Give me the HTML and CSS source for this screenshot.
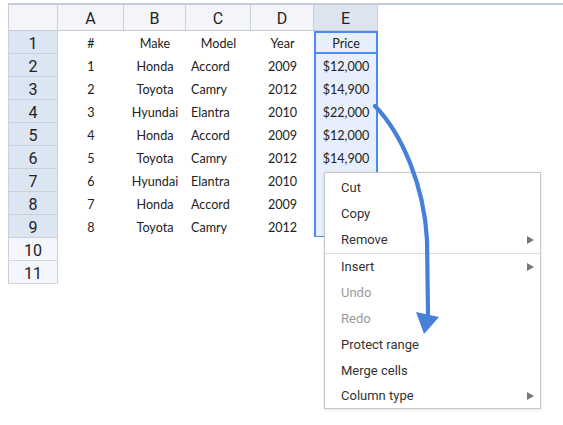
FILE: index.html
```html
<!DOCTYPE html>
<html>
<head>
<meta charset="utf-8">
<link rel="stylesheet" href="styles.css">
</head>
<body>
<div class="page">
  <div class="sheet">
    <div class="row head">
      <div class="corner"></div>
      <div class="ch">A</div>
      <div class="ch">B</div>
      <div class="ch">C</div>
      <div class="ch">D</div>
      <div class="ch sel">E</div>
    </div>
    <div class="row">
      <div class="rh on">1</div><div class="c">#</div><div class="c">Make</div><div class="c">Model</div><div class="c">Year</div><div class="c e active">Price</div>
    </div>
    <div class="row">
      <div class="rh on">2</div><div class="c">1</div><div class="c">Honda</div><div class="c l">Accord</div><div class="c">2009</div><div class="c e">$12,000</div>
    </div>
    <div class="row">
      <div class="rh on">3</div><div class="c">2</div><div class="c">Toyota</div><div class="c l">Camry</div><div class="c">2012</div><div class="c e">$14,900</div>
    </div>
    <div class="row">
      <div class="rh on">4</div><div class="c">3</div><div class="c">Hyundai</div><div class="c l">Elantra</div><div class="c">2010</div><div class="c e">$22,000</div>
    </div>
    <div class="row">
      <div class="rh on">5</div><div class="c">4</div><div class="c">Honda</div><div class="c l">Accord</div><div class="c">2009</div><div class="c e">$12,000</div>
    </div>
    <div class="row">
      <div class="rh on">6</div><div class="c">5</div><div class="c">Toyota</div><div class="c l">Camry</div><div class="c">2012</div><div class="c e">$14,900</div>
    </div>
    <div class="row">
      <div class="rh on">7</div><div class="c">6</div><div class="c">Hyundai</div><div class="c l">Elantra</div><div class="c">2010</div><div class="c e"></div>
    </div>
    <div class="row">
      <div class="rh on">8</div><div class="c">7</div><div class="c">Honda</div><div class="c l">Accord</div><div class="c">2009</div><div class="c e"></div>
    </div>
    <div class="row">
      <div class="rh on">9</div><div class="c">8</div><div class="c">Toyota</div><div class="c l">Camry</div><div class="c">2012</div><div class="c e last"></div>
    </div>
    <div class="row">
      <div class="rh">10</div><div class="c"></div><div class="c"></div><div class="c"></div><div class="c"></div><div class="c"></div>
    </div>
    <div class="row">
      <div class="rh">11</div><div class="c"></div><div class="c"></div><div class="c"></div><div class="c"></div><div class="c"></div>
    </div>
  </div>

  <div class="menu">
    <div class="item">Cut</div>
    <div class="item">Copy</div>
    <div class="item sub">Remove</div>
    <div class="sep"></div>
    <div class="item sub">Insert</div>
    <div class="item dis">Undo</div>
    <div class="item dis">Redo</div>
    <div class="item">Protect range</div>
    <div class="item">Merge cells</div>
    <div class="item sub lastitem">Column type</div>
  </div>

  <svg class="arrow" width="563" height="425" viewBox="0 0 563 425">
    <path d="M375,106 C402,134 424,185 427,240 L428,314" fill="none" stroke="#4680d9" stroke-width="4.2" stroke-linecap="round"/>
    <polygon points="416,312 439,317 424,334" fill="#4680d9"/>
  </svg>
</div>
</body>
</html>
```
FILE: styles.css
```css
html, body {
  margin: 0;
  padding: 0;
  background: #fff;
}
.page {
  position: relative;
  width: 563px;
  height: 425px;
  overflow: hidden;
  font-family: Lato, "Liberation Sans", sans-serif;
}
.sheet {
  margin-left: 8px;
  padding-top: 3px;
}
.row {
  display: grid;
  grid-template-columns: 50px 66px 62px 65px 63px 64px;
  height: 23px;
}
.row.head {
  height: 28px;
  border-top: 2px solid #c3ccd8;
  box-sizing: border-box;
  width: 555px;
}
.corner, .ch {
  background: #f3f5f9;
  border-right: 1px solid #cdd1d7;
  border-bottom: 1px solid #c9cdd3;
  font-family: Roboto, sans-serif;
  font-size: 16px;
  color: #222;
  display: flex;
  align-items: center;
  justify-content: center;
  padding-top: 1px;
  box-sizing: border-box;
}
.corner {
  border-left: 1px solid #cdd1d7;
}
.ch.sel {
  background: #dce4ef;
}
.rh {
  background: #f3f6fa;
  border-left: 1px solid #cdd1d7;
  border-right: 1px solid #cdd1d7;
  border-bottom: 1px solid #d4d8de;
  font-family: Roboto, sans-serif;
  font-size: 16px;
  color: #222;
  display: flex;
  align-items: center;
  justify-content: center;
  padding-top: 2px;
  box-sizing: border-box;
}
.rh.on {
  background: #dce5f2;
  border-bottom-color: #c9d0da;
}
.c {
  font-size: 12.6px;
  color: #222;
  display: flex;
  align-items: center;
  justify-content: center;
  white-space: nowrap;
  padding-top: 2px;
  box-sizing: border-box;
}
.c.l {
  justify-content: flex-start;
  padding-left: 5px;
}
.c.e {
  background: #e7effd;
  border-left: 2px solid #4c8bf5;
  border-right: 2px solid #4c8bf5;
}
.c.e.active {
  border: 2px solid #4c8bf5;
}
.c.e.last {
  border-bottom: 1px solid #4c8bf5;
  height: 22px;
}
.menu {
  position: absolute;
  left: 324px;
  top: 172px;
  width: 215px;
  background: #fff;
  border: 1px solid #c8c8c8;
  box-shadow: 0 1px 3px rgba(0, 0, 0, 0.12);
  padding-top: 2px;
  font-family: Roboto, sans-serif;
  font-size: 13px;
  color: #333;
}
.item {
  height: 26px;
  line-height: 26px;
  padding-left: 16px;
  position: relative;
}
.item.lastitem {
  height: 24px;
  line-height: 24px;
}
.item.dis {
  color: #9a9a9a;
}
.item.sub::after {
  content: "";
  position: absolute;
  right: 6px;
  top: 9px;
  border-left: 7px solid #777;
  border-top: 4px solid transparent;
  border-bottom: 4px solid transparent;
}
.item.lastitem::after {
  top: 8px;
}
.sep {
  height: 1px;
  background: #dcdcdc;
}
.arrow {
  position: absolute;
  left: 0;
  top: 0;
  pointer-events: none;
}
```
